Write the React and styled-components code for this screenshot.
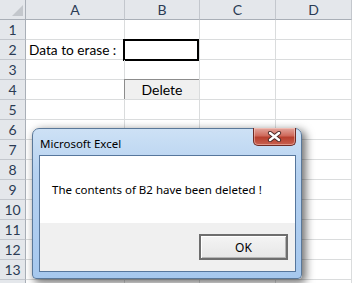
import { Fragment } from "react";
import { createGlobalStyle, styled } from "styled-components";

const GlobalStyle = createGlobalStyle`
  * { box-sizing: border-box; }
  html, body { margin: 0; padding: 0; background: #fff; overflow: hidden; }
`;

const columns = ["A", "B", "C", "D"];
const rowCount = 14;

const renderCell = (col, row) => {
  if (col === "A" && row === 2) return <CellText>Data to erase :</CellText>;
  if (col === "B" && row === 4) return <SheetButton>Delete</SheetButton>;
  return null;
};

const App = () => {
  return (
    <>
      <GlobalStyle />
      <Workbook>
        <Sheet>
          <Corner>
            <CornerMark />
          </Corner>
          {columns.map((c) => (
            <ColHeader key={c}>{c}</ColHeader>
          ))}
          {Array.from({ length: rowCount }, (_, i) => {
            const row = i + 1;
            return (
              <Fragment key={row}>
                {/* the last row is only a sliver at the bottom edge */}
                <RowHeader>{row < rowCount ? row : ""}</RowHeader>
                {columns.map((c) => (
                  <Cell key={c} $selected={c === "B" && row === 2}>
                    {renderCell(c, row)}
                  </Cell>
                ))}
              </Fragment>
            );
          })}
        </Sheet>

        <Dialog>
          <TitleBar>
            <Title>Microsoft Excel</Title>
            <CloseButton>
              <svg width="15" height="11" viewBox="0 0 15 11">
                <path
                  d="M3 2 L12 9 M12 2 L3 9"
                  stroke="#4a2a28"
                  strokeWidth="4.2"
                  strokeLinecap="round"
                  fill="none"
                />
                <path
                  d="M3 2 L12 9 M12 2 L3 9"
                  stroke="#ffffff"
                  strokeWidth="2.4"
                  strokeLinecap="round"
                  fill="none"
                />
              </svg>
            </CloseButton>
          </TitleBar>
          <Client>
            <Message>The contents of B2 have been deleted !</Message>
            <Footer>
              <OkButton>OK</OkButton>
            </Footer>
          </Client>
        </Dialog>
      </Workbook>
    </>
  );
};

export default App;

const Workbook = styled.div`
  position: relative;
  width: 352px;
  height: 283px;
  overflow: hidden;
  background: #fff;
`;

const Sheet = styled.div`
  display: grid;
  grid-template-columns: 26px 99px 75px 76px 76px;
  grid-template-rows: 20px;
  grid-auto-rows: 20px;
  font-family: Lato, "Liberation Sans", sans-serif;
`;

const Corner = styled.div`
  background: #e4e7eb;
  border-right: 1px solid #a9afb7;
  border-bottom: 1px solid #a9afb7;
  display: flex;
  justify-content: flex-end;
  align-items: flex-end;
  padding: 0 2px 3px 0;
`;

const CornerMark = styled.div`
  width: 0;
  height: 0;
  border-left: 11px solid transparent;
  border-bottom: 11px solid #c3c7cc;
`;

const ColHeader = styled.div`
  background: #e4e7eb;
  border-right: 1px solid #c3c7cd;
  border-bottom: 1px solid #a9afb7;
  display: flex;
  align-items: center;
  justify-content: center;
  font-size: 14px;
  color: #2b3b54;
`;

const RowHeader = styled.div`
  background: #e4e7eb;
  border-right: 1px solid #a9afb7;
  border-bottom: 1px solid #c3c7cd;
  display: flex;
  align-items: center;
  justify-content: center;
  font-size: 14px;
  color: #2b3b54;
`;

const Cell = styled.div`
  position: relative;
  border-right: 1px solid #dadcdd;
  border-bottom: 1px solid #dadcdd;
  display: flex;
  align-items: center;
  &::after {
    content: "";
    display: ${(p) => (p.$selected ? "block" : "none")};
    position: absolute;
    left: -2px;
    top: -1px;
    right: 0;
    bottom: -2px;
    border: 2px solid #000;
  }
`;

const CellText = styled.span`
  padding-left: 3px;
  font-size: 13.7px;
  color: #000;
  white-space: nowrap;
`;

const SheetButton = styled.div`
  align-self: stretch;
  width: calc(100% + 1px);
  margin: -1px 0 0 -1px;
  height: calc(100% + 1px);
  background: #f0f0f0;
  border-top: 1px solid #8c8c8c;
  border-left: 1px solid #8c8c8c;
  display: flex;
  align-items: center;
  justify-content: center;
  font-size: 14px;
  color: #000;
`;

const Dialog = styled.div`
  position: absolute;
  left: 32px;
  top: 128px;
  width: 270px;
  height: 151px;
  display: flex;
  flex-direction: column;
  border: 1px solid #5a7899;
  border-radius: 7px 7px 4px 4px;
  background: linear-gradient(180deg, #cde1f5 0%, #b5d1f0 30%, #a6c8ee 100%);
  box-shadow: 3px 3px 9px 1px rgba(0, 0, 0, 0.55);
  font-family: "Noto Sans", "Open Sans", sans-serif;
`;

const TitleBar = styled.div`
  height: 26px;
  display: flex;
  align-items: flex-start;
  justify-content: space-between;
  padding: 0 5px 0 7px;
`;

const Title = styled.div`
  margin-top: 7px;
  font-size: 11.5px;
  color: #000;
`;

const CloseButton = styled.div`
  width: 43px;
  height: 18px;
  margin-top: -1px;
  display: flex;
  align-items: center;
  justify-content: center;
  border: 1px solid #6e2a24;
  border-top: none;
  border-radius: 0 0 5px 5px;
  background: linear-gradient(180deg, #e3a79e 0%, #cf6a5c 45%, #b8402f 55%, #c8604f 100%);
  box-shadow: inset 0 0 0 1px rgba(255, 220, 210, 0.45);
`;

const Client = styled.div`
  flex: 1;
  margin: 0 5px 6px 6px;
  border: 1px solid #56769c;
  display: flex;
  flex-direction: column;
  background: #fff;
`;

const Message = styled.div`
  flex: 1;
  display: flex;
  align-items: center;
  padding-left: 12px;
  font-size: 11.5px;
  color: #000;
`;

const Footer = styled.div`
  height: 48px;
  background: #f0f0f0;
  display: flex;
  align-items: center;
  justify-content: flex-end;
  padding-right: 7px;
`;

const OkButton = styled.div`
  width: 89px;
  height: 26px;
  display: flex;
  align-items: center;
  justify-content: center;
  border: 2px solid #6e6e6e;
  background: linear-gradient(180deg, #f4f4f4 0%, #e6e6e6 100%);
  box-shadow: inset 1px 1px 0 #ffffff, inset -1px -1px 0 #b5b5b5;
  font-size: 12px;
  color: #000;
`;
